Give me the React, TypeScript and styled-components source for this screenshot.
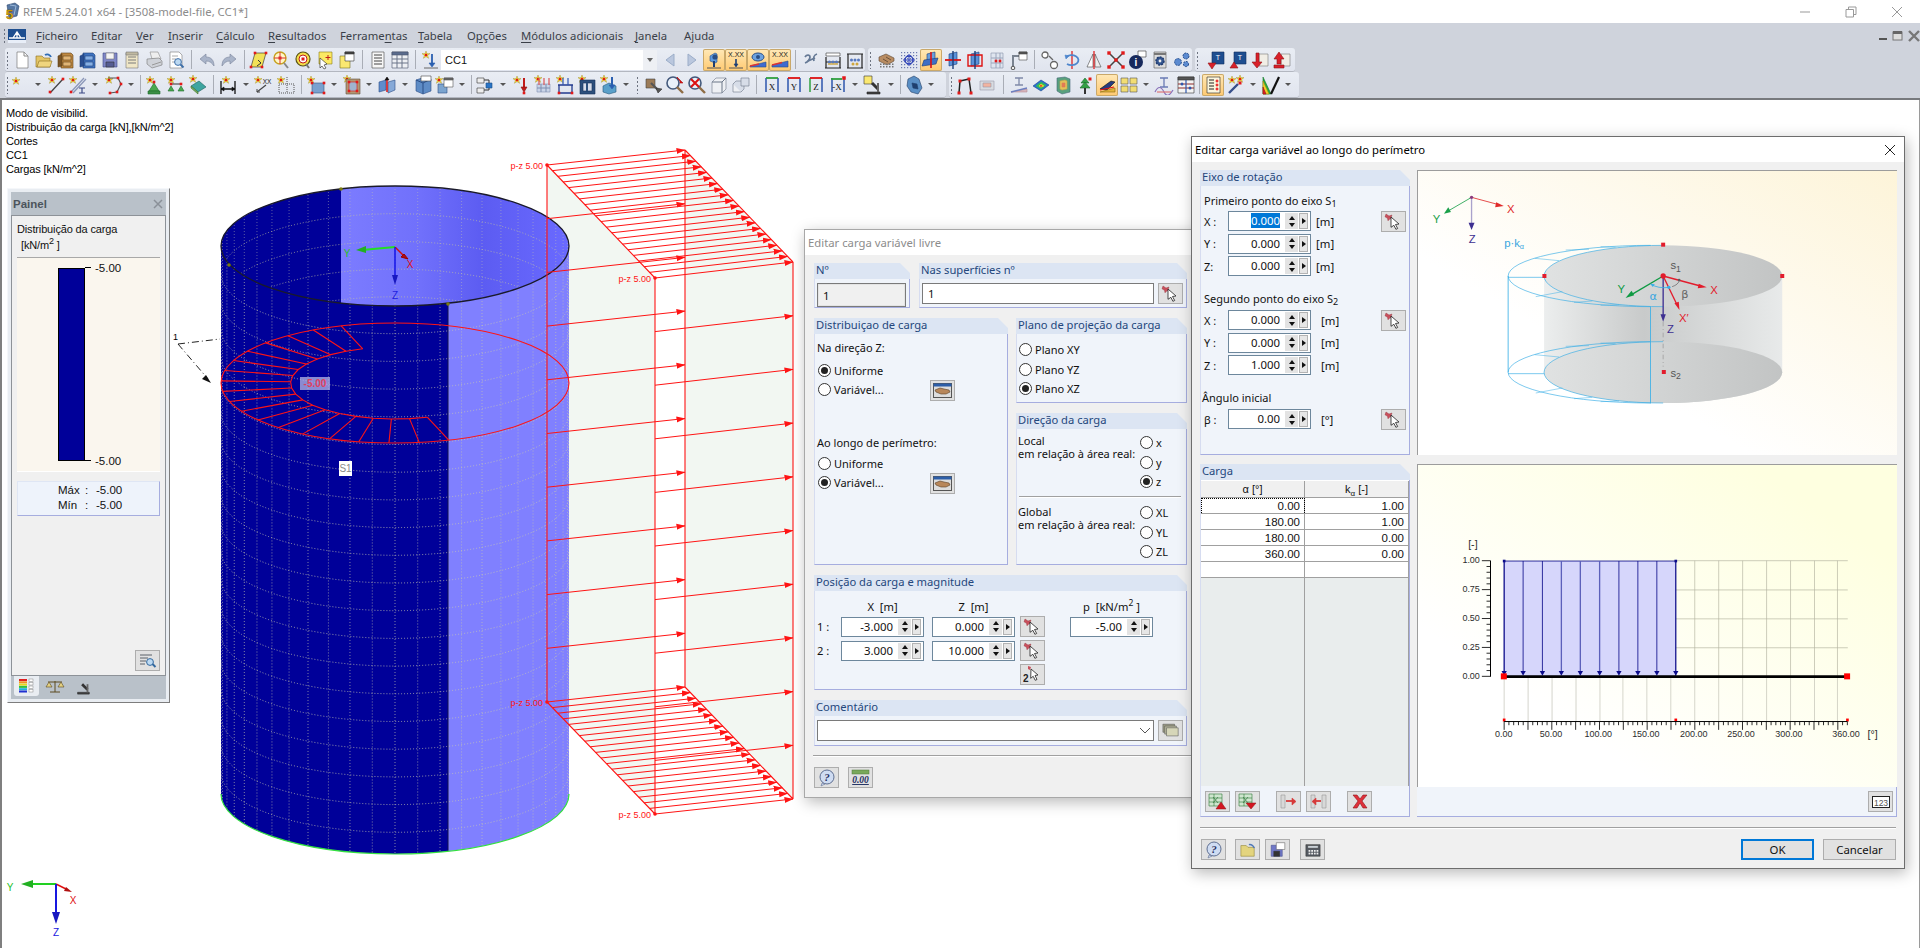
import React from 'react';
import styled, { createGlobalStyle } from 'styled-components';

const UI = '"Noto Sans", "Liberation Sans", sans-serif';
const CL = '"Liberation Sans", Arial, sans-serif';

const Global = createGlobalStyle`
  html, body { margin: 0; padding: 0; background: #fff; overflow: hidden; }
  #root { width: 1920px; height: 948px; }
  * { box-sizing: border-box; }
`;

/* ---------- shell ---------- */
const Win = styled.div`
  width: 1920px; height: 948px; display: flex; flex-direction: column; font-family: ${UI}; color: #111; overflow: hidden;
`;
const TitleBar = styled.header`
  height: 23px; flex: none; display: flex; align-items: center; background: #fff; padding-left: 2px;
`;
const TitleText = styled.span`
  font-size: 11.3px; color: #8b8b8b; margin-left: 3px; flex: 1; white-space: nowrap;
`;
const Caption = styled.div`
  width: 46px; display: flex; justify-content: center; align-items: center; height: 23px;
`;
const Chrome = styled.div`
  flex: none; background: #cfd3dc; border-bottom: 2px solid #77797d;
`;
const MenuBar = styled.nav`
  height: 25px; display: flex; align-items: center; padding-left: 3px;
`;
const Grip = styled.i<{ $h?: number; $m?: number; $l?: number }>`
  display: block; width: 3px; height: ${p => p.$h || 18}px; flex: none; margin: 0 ${p => p.$m ?? 2}px 0 ${p => p.$l ?? 0}px;
  background-image: radial-gradient(circle, #6d7380 0.8px, transparent 1px); background-size: 3px 4px;
`;
const MenuLogo = styled.div`
  width: 18px; height: 14px; background: #1f4f8f; margin: 0 10px 0 2px; flex: none; display: flex;
`;
const MenuItem = styled.span<{ $w: number }>`
  width: ${p => p.$w}px; flex: none; font-size: 11.3px; color: #3a3f48; white-space: nowrap;
  u { text-underline-offset: 2px; }
`;
const MdiBox = styled.div`
  margin-left: auto; display: flex; gap: 4px; padding-right: 0; align-items: center;
`;
const ToolRow = styled.div<{ $h: number }>`
  height: ${p => p.$h}px; display: flex; padding-left: 5px; gap: 3px; align-items: stretch;
`;
const ToolGroup = styled.div<{ $w: number }>`
  width: ${p => p.$w}px; flex: none; display: flex; align-items: center; padding-left: 1px; border-radius: 3px;
  background: linear-gradient(#e9edf4, #e0e4ee); border-bottom: 1px solid #b3b7c0;
`;
const Slot = styled.span<{ $on?: boolean }>`
  width: 22px; height: 22px; flex: none; display: flex; align-items: center; justify-content: center; border-radius: 2px;
  ${p => p.$on ? 'background: linear-gradient(#ffe9b8, #ffc970); box-shadow: inset 0 0 0 1px #c9a86a;' : ''}
`;
const Drop = styled.span`
  width: 13.5px; flex: none; display: flex; justify-content: center; align-items: center;
  &::after { content: ''; border: 3px solid transparent; border-top: 3px solid #555; margin-top: 3px; }
`;
const TSep = styled.span<{ $short?: boolean }>`
  width: ${p => p.$short ? 5 : 8.5}px; height: 19px; flex: none; position: relative;
  &::after { content: ''; position: absolute; left: ${p => p.$short ? 2 : 4}px; top: 0; bottom: 0; width: 1px; background: #a9adb6; }
`;
const CaseCombo = styled.div`
  width: 216px; height: 20px; flex: none; background: #fff; margin: 0 2px 0 0; display: flex; align-items: center;
  font: 11px ${CL}; padding-left: 4px; justify-content: space-between;
`;
const ComboArrow = styled.span`
  width: 14px; height: 20px; background: #eef0f4; display: flex; align-items: center; justify-content: center;
  &::after { content: ''; border: 3px solid transparent; border-top: 4px solid #666; margin-top: 3px; }
`;

/* ---------- workspace ---------- */
const Workspace = styled.main`
  flex: 1; position: relative; background: #fff; box-shadow: inset 2px 0 0 #7f7f7f, inset -1px 0 0 #9a9a9a;
`;
const Scene = styled.svg`
  position: absolute; left: 0; top: 0; width: 1920px; height: 847px;
`;
const Info = styled.div`
  position: absolute; left: 6px; top: 6px; font: 11px/14px ${CL}; letter-spacing: -0.13px; color: #000;
`;

/* ---------- side panel ---------- */
const Panel = styled.aside`
  position: absolute; left: 7px; top: 88px; width: 163px; height: 515px; padding: 3px; background: #e9edf2;
  border-right: 1px solid #7d7d7d; border-bottom: 1px solid #7d7d7d; border-top: 1px solid #f5f7fa; border-left: 1px solid #f5f7fa;
  display: flex; flex-direction: column; font-family: ${CL};
`;
const PanelHead = styled.div`
  height: 23px; flex: none; background: #b9c1c9; display: flex; align-items: center; justify-content: space-between; padding: 0 3px 0 2px;
  font: bold 11.5px ${CL}; color: #4c545c;
`;
const PanelBody = styled.div`
  flex: 1; background: #f0f0f0; border: 1px solid #8d9298; display: flex; flex-direction: column; padding: 6px 5px 4px 5px; font-size: 11px;
`;
const PanelLine = styled.div<{ $h?: number; $l?: number }>`
  height: ${p => p.$h || 15}px; padding-left: ${p => p.$l || 0}px; line-height: 15px; white-space: nowrap; letter-spacing: -0.15px;
  sup { font-size: 9px; line-height: 0; }
`;
const Legend = styled.div`
  height: 215px; margin-top: 2px; background: #faf6ee; border-top: 1px solid #a8a8a8; border-bottom: 1px solid #fff; display: flex; padding: 10px 0 10px 41px;
`;
const LegendBar = styled.div`
  width: 27px; background: #000099; border: 1px solid #000; flex: none;
`;
const LegendTicks = styled.div`
  display: flex; flex-direction: column; justify-content: space-between; margin: -7px 0 -6px;
`;
const Tick = styled.span`
  display: flex; align-items: center; gap: 4px; height: 13px; font-size: 11.5px;
  &::before { content: ''; width: 6px; height: 1px; background: #000; }
`;
const Stats = styled.div`
  margin-top: 9px; height: 35px; background: #eef3fb; border: 1px solid #dfe6f4; border-bottom: 1px solid #a6addf; border-right: 1px solid #a6addf;
  display: grid; grid-template-columns: 27px 11px auto; grid-auto-rows: 15px; padding: 2px 0 0 40px; font-size: 11.5px;
  justify-content: start; justify-items: start;
`;
const PanelFoot = styled.div`
  margin-top: auto; display: flex; justify-content: flex-end;
`;
const PanelTabs = styled.div`
  height: 23px; flex: none; background: #b9c1c9; display: flex; align-items: flex-start; padding-left: 3px; gap: 3px;
`;
const PanelTab = styled.span<{ $on?: boolean }>`
  width: 25px; height: 20px; display: flex; align-items: center; justify-content: center; ${p => p.$on ? 'background: #e9edf2; border-radius: 0 0 3px 3px;' : ''}
`;

/* ---------- dialogs ---------- */
const Dialog = styled.section<{ $x: number; $y: number; $w: number; $h: number; $active?: boolean }>`
  position: absolute; left: ${p => p.$x}px; top: ${p => p.$y}px; width: ${p => p.$w}px; height: ${p => p.$h}px;
  background: #f0f0f0; border: 1px solid ${p => p.$active ? '#6d6d6d' : '#a8a8a8'}; display: flex; flex-direction: column;
  box-shadow: 2px 4px 14px rgba(0, 0, 0, .28); font-size: 11px;
`;
const DialogTitle = styled.div<{ $active?: boolean }>`
  height: 25px; flex: none; background: #fff; display: flex; align-items: center; justify-content: space-between; padding: 0 8px 0 3px;
  font-size: 11.3px; color: ${p => p.$active ? '#000' : '#8c8c8c'};
`;
const DialogBody = styled.div<{ $pad: string; $gap?: number }>`
  flex: 1; min-height: 0; padding: ${p => p.$pad}; display: flex; flex-direction: column; gap: ${p => p.$gap ?? 0}px;
`;
const Row = styled.div<{ $gap?: number; $h?: number }>`
  display: flex; gap: ${p => p.$gap ?? 8}px; ${p => p.$h ? `height: ${p.$h}px; flex: none;` : ''}
`;
const Col = styled.div<{ $gap?: number; $w?: number }>`
  display: flex; flex-direction: column; gap: ${p => p.$gap ?? 0}px; ${p => p.$w ? `width: ${p.$w}px; flex: none;` : 'flex: 1;'}
`;
const Section = styled.div<{ $w?: number; $h?: number }>`
  display: flex; flex-direction: column; ${p => p.$w ? `width: ${p.$w}px; flex: none;` : 'flex: 1; min-width: 0;'} ${p => p.$h ? `height: ${p.$h}px; flex: none;` : ''}
`;
const SectionHead = styled.div`
  height: 16px; flex: none; background: #dce5f3; padding-left: 2px; line-height: 13px; color: #24477c; font-size: 11.2px; white-space: nowrap;
  clip-path: polygon(0 0, calc(100% - 10px) 0, 100% 10px, 100% 100%, 0 100%);
`;
const SectionBody = styled.div<{ $pad?: string }>`
  flex: 1; min-height: 0; background: #f0f4fa; border-right: 1px solid #a6addf; border-bottom: 1px solid #a6addf; border-left: 1px solid #d6dcf0;
  padding: ${p => p.$pad || '0'}; display: flex; flex-direction: column;
`;
const Text = styled.div<{ $h?: number; $t?: number; $l?: number }>`
  height: ${p => p.$h || 16}px; line-height: ${p => p.$h || 16}px; margin-top: ${p => p.$t || 0}px; margin-left: ${p => p.$l || 0}px; white-space: nowrap; flex: none;
  sub { font-size: 9px; line-height: 0; vertical-align: -2px; }
  sup { font-size: 8.5px; line-height: 0; }
`;
const FieldBox = styled.div<{ $ro?: boolean; $w?: number }>`
  height: 21px; ${p => p.$w ? `width: ${p.$w}px; flex: none;` : 'flex: 1;'} background: ${p => p.$ro ? '#f0f0f0' : '#fff'};
  border: 1px solid #7a7a7a; box-shadow: inset 0 0 0 1px ${p => p.$ro ? '#e4e4e4' : '#fff'}; padding-left: 5px; line-height: 19px; font-size: 11.4px;
  display: flex; align-items: center; justify-content: space-between;
`;
const IconBtn = styled.button`
  width: 25px; height: 21px; flex: none; padding: 0; background: #e1e1e1; border: 1px solid #adadad; display: flex; align-items: center; justify-content: center;
`;
const RadioWrap = styled.div<{ $h?: number; $t?: number; $l?: number }>`
  height: ${p => p.$h || 19}px; display: flex; align-items: center; gap: 3px; margin-top: ${p => p.$t || 0}px; margin-left: ${p => p.$l || 0}px; white-space: nowrap; flex: none;
`;
const Dot = styled.span<{ $on?: boolean }>`
  width: 13px; height: 13px; flex: none; border-radius: 50%; background: #fff; border: 1px solid #333; display: flex; align-items: center; justify-content: center;
  ${p => p.$on ? '&::after { content: ""; width: 7px; height: 7px; border-radius: 50%; background: #222; }' : ''}
`;
const Spin = styled.div`
  width: 83px; height: 20px; flex: none; background: #fff; border: 1px solid #6d879c; display: flex; align-items: center; padding-right: 2px;
`;
const SpinVal = styled.div`
  flex: 1; text-align: right; padding-right: 5px; font-size: 11.4px; line-height: 18px; color: #111;
  mark { background: #0078d7; color: #fff; }
`;
const SpinBtn = styled.div`
  width: 13px; height: 16px; flex: none; background: #e3e3e3; display: flex; flex-direction: column; justify-content: space-around; align-items: center; padding: 1px 0;
  &::before { content: ''; border: 3px solid transparent; border-top: 0; border-bottom: 4px solid #111; }
  &::after { content: ''; border: 3px solid transparent; border-bottom: 0; border-top: 4px solid #111; }
`;
const SpinNext = styled.div`
  width: 9px; height: 16px; flex: none; margin-left: 1px; background: #e6e6e6; border: 1px solid #b3b3b3; display: flex; align-items: center; justify-content: center;
  &::after { content: ''; border: 3px solid transparent; border-right: 0; border-left: 4px solid #111; }
`;
const Rule = styled.div<{ $m?: string }>`
  height: 2px; flex: none; border-top: 1px solid #a0a0a0; border-bottom: 1px solid #fff; margin: ${p => p.$m || '0'};
`;
const Foot = styled.div<{ $pad: string }>`
  display: flex; align-items: center; padding: ${p => p.$pad}; flex: none;
`;
const Push = styled.span<{ $w?: number }>`
  ${p => p.$w ? `width: ${p.$w}px; flex: none;` : 'flex: 1;'}
`;
const PosGrid = styled.div`
  display: grid; grid-template-columns: 24px 83px 8px 83px 5px 25px 25px 83px; grid-template-rows: 19px 21px 3px 21px 3px 21px; align-items: center; padding: 6px 0 0 2px;
`;
const ColHead = styled.div<{ $c: number }>`
  grid-column: ${p => p.$c}; text-align: center; white-space: nowrap; font-size: 11.2px; grid-row: 1;
  sup { font-size: 8.5px; line-height: 0; }
`;
const Cell = styled.div<{ $c: number; $r: number }>`
  grid-column: ${p => p.$c}; grid-row: ${p => p.$r}; font-size: 11.2px;
`;
const AxisGrid = styled.div<{ $t: number }>`
  display: grid; grid-template-columns: 24px 83px 1fr 25px; grid-auto-rows: 20px; row-gap: 2.5px; align-items: center; padding-left: 2px; margin-top: ${p => p.$t}px;
`;
const Unit = styled.span<{ $o?: number }>`
  padding-left: ${p => 5 + (p.$o || 0)}px; font-size: 11.4px;
`;
const PickCell = styled.div`
  grid-column: 4; grid-row: 1;
`;
const TwoPanes = styled.div`
  display: flex; gap: 7px;
`;
const Drawing = styled.div<{ $h: number }>`
  width: 480px; height: ${p => p.$h}px; flex: none; border-top: 1px solid #9c9c9c; border-left: 1px solid #9c9c9c;
`;
const DrawSvg = styled.svg`
  display: block; width: 100%; height: 100%;
`;
const TableHead = styled.div`
  display: grid; grid-template-columns: 104px 104px; height: 18px; background: #f0f0f0; border-bottom: 1px solid #a0a0a0; border-top: 1px solid #fff; flex: none;
`;
const HeadCell = styled.div`
  text-align: center; font: 11px/17px ${CL}; border-right: 1px solid #a0a0a0;
  sub { font-size: 8px; line-height: 0; }
`;
const TableRow = styled.div`
  display: grid; grid-template-columns: 104px 104px; height: 16px; background: #fff; border-bottom: 1px solid #a0a0a0; flex: none;
`;
const ValCell = styled.div<{ $focus?: boolean }>`
  text-align: right; padding-right: 4px; font: 11.5px/17px ${CL}; border-right: 1px solid #a0a0a0;
  ${p => p.$focus ? 'outline: 1px dotted #000; outline-offset: -1px;' : ''}
`;
const TableFill = styled.div`
  flex: 1; display: grid; grid-template-columns: 104px 104px; background: #e9eded;
`;
const FillCell = styled.div`
  border-right: 1px solid #a0a0a0;
`;
const BtnStrip = styled.div`
  height: 30px; flex: none; display: flex; align-items: center; padding-left: 4px; gap: 5px;
`;
const ChartBar = styled.div`
  flex: 1; display: flex; align-items: center; justify-content: flex-end; padding-right: 3px; background: #f0f4fa; border-right: 1px solid #a6addf; border-bottom: 1px solid #a6addf;
`;
const TextBtn = styled.button<{ $primary?: boolean }>`
  width: 73px; height: 21px; flex: none; font: 11.4px ${UI}; color: #111; padding: 0; background: #e1e1e1;
  border: ${p => p.$primary ? '2px solid #0078d7' : '1px solid #adadad'};
`;

/* ---------- small drawings ---------- */
const S = (x = 5, y = 5) => (
  <g>
    <path d={`M${x} ${y - 4}l1 2.8 3-.2-2.4 1.8 1 2.9-2.6-1.7-2.6 1.7 1-2.9-2.4-1.8 3 .2z`} fill="#ffe93b" stroke="#8f7f18" strokeWidth=".4" />
    <rect x={x - 1.2} y={y - 1.2} width="2.4" height="2.4" fill="#e01818" />
  </g>
);
const N = (x: number, y: number, s = 2.6) => <rect x={x - s / 2} y={y - s / 2} width={s} height={s} fill="#e21a1a" />;
const L = (d: string, c = '#333', w = 1) => <path d={d} fill="none" stroke={c} strokeWidth={w} />;
const F = (d: string, c: string, s = '#555') => <path d={d} fill={c} stroke={s} strokeWidth=".6" />;

const icons: Record<string, React.ReactNode> = {
  new: <>{F('M5 2h7l4 4v12H5z', '#fff', '#666')}{L('M12 2v4h4', '#888')}</>,
  open: <>{F('M2 6h6l2 2h6v9H2z', '#e3c566', '#8a6d1e')}{F('M3 17l2-6h13l-2 6z', '#f0d57e', '#8a6d1e')}{L('M11 5a4 4 0 0 1 6 2', '#2f6cb5', 1.8)}</>,
  cabB: <>{F('M5 3h10l2 2v13H5z', '#c08a43', '#5f3f17')}{F('M7 6h8v4H7z', '#e0b577', '#5f3f17')}{F('M7 12h8v4H7z', '#e0b577', '#5f3f17')}{F('M2 6l4-2v12l-4 1z', '#7a5526', '#5f3f17')}</>,
  cabU: <>{F('M5 3h10l2 2v13H5z', '#3f73c0', '#1f3f77')}{F('M7 6h8v4H7z', '#86b0e5', '#1f3f77')}{F('M7 12h8v4H7z', '#86b0e5', '#1f3f77')}{F('M2 6l4-2v12l-4 1z', '#2a4f92', '#1f3f77')}</>,
  save: <>{F('M3 3h14v14H3z', '#7f87c8', '#3d4684')}{F('M6 3h8v6H6z', '#f4f4f4', '#777')}{F('M6 12h8v5H6z', '#555c92', '#333')}</>,
  notes: <>{F('M4 3h12v15H4z', '#efe6c6', '#777')}{L('M6 7h8M6 10h8M6 13h8', '#7a7a7a')}{F('M4 2h12v3H4z', '#bfb8a0', '#777')}</>,
  print: <>{F('M6 2h8l3 7H8z', '#eee', '#888')}{F('M3 9l12-1 3 3v4l-10 3-5-4z', '#cfd2d8', '#777')}{L('M8 15l9-3', '#999')}</>,
  preview: <>{F('M4 2h9l3 3v13H4z', '#fff', '#777')}{L('M6 6h6M6 9h4M6 12h3', '#aaa')}<circle cx="12" cy="12" r="3.4" fill="#bcd9f2" stroke="#3f6fa8" />{L('M14.5 14.5l3 3', '#3f6fa8', 2)}</>,
  undo: <>{F('M3 9l6-5v3c5 0 8 3 8 9-2-3-4-5-8-5v3z', '#a9b4c9', '#78839a')}</>,
  redo: <>{F('M17 9l-6-5v3c-5 0-8 3-8 9 2-3 4-5 8-5v3z', '#a9b4c9', '#78839a')}</>,
  para: <>{F('M6 3h11l-4 14H2z', '#f2e257', '#222')}{L('M9 10l3 3l-4 3', '#333')}{N(6, 3)}{N(17, 3)}{N(13, 17)}{N(2, 17)}</>,
  zoomT: <><circle cx="9" cy="8" r="6" fill="#fff7c8" stroke="#c7a21f" strokeWidth="1.4" />{N(9, 8, 3)}{L('M3 8h12M9 2v12', '#d33')}{L('M13 13l4 5', '#888', 2)}</>,
  targetY: <><circle cx="10" cy="9" r="7" fill="#f5de49" stroke="#5a5417" strokeWidth="1.2" /><circle cx="10" cy="9" r="4" fill="#fff" stroke="#c01b1b" />{N(10, 9, 3)}{L('M13 14l3 4', '#777', 2)}</>,
  cursorNote: <>{F('M4 2h13v12H4z', '#fbe964', '#8a7d16')}{L('M13 5v5M10.5 7.5h5', '#c01b1b')}{F('M5 8l7 6-3 1 2 3-2 1-2-3-2 2z', '#fff', '#222')}</>,
  winY: <>{F('M3 6h10v12H3z', '#fbe871', '#77701f')}{F('M8 2h9v9H8z', '#fff', '#333')}{F('M8 2h9v2H8z', '#444', '#333')}</>,
  list: <>{F('M4 2h12v16H4z', '#f7f7f7', '#444')}{L('M6 5h8M6 8h8M6 11h8M6 14h8', '#444')}</>,
  table: <>{F('M2 2h16v16H2z', '#eef0f4', '#47506a')}{F('M2 2h16v3H2z', '#5a6b8d', '#47506a')}{L('M2 9h16M2 13h16M7 5v13M12 5v13', '#6a7489')}</>,
  lc: <>{S(6, 5)}{L('M12 4v11', '#2a5fb0', 1.8)}{F('M9 13l3 4 3-4z', '#2a5fb0', '#2a5fb0')}{L('M4 18h14', '#666')}</>,
  pL: <>{F('M11 3l-5 3v5l5 2 2-1V4z', '#5d9be0', '#2a4f86')}<circle cx="11" cy="7" r="2.6" fill="#2a4f86" />{L('M10 11v6', '#1c3e75', 2)}{L('M3 18h14', '#555')}</>,
  xx: <><text x="10" y="7" textAnchor="middle" fontFamily={CL} fontSize="7" fill="#222">X.XX</text>{L('M10 9v7', '#1c3e75', 1.6)}{F('M8 14l2 3 2-3z', '#1c3e75', '#1c3e75')}{L('M3 18h14', '#555')}</>,
  eyeR: <><ellipse cx="10" cy="7" rx="6" ry="4" fill="#6ca2df" stroke="#294d84" /><circle cx="10" cy="7" r="2" fill="#2a4f86" />{F('M2 16l16-4v5H2z', '#3f6bd0', '#2a4f86')}{L('M2 16l9-2', '#d33', 1.5)}</>,
  xxR: <><text x="10" y="7" textAnchor="middle" fontFamily={CL} fontSize="7" fill="#222">X.XX</text>{F('M2 15l16-4v6H2z', '#3f6bd0', '#2a4f86')}{L('M2 15l10-2.5', '#d33', 1.5)}</>,
  hinge: <>{L('M4 7c2-3 5-2 5 0s-2 5-5 6', '#667a96', 1.8)}{L('M16 4c-3 1-4 4-3 7', '#667a96', 1.8)}{L('M7 11l7-3', '#667a96', 1.8)}</>,
  frame: <>{F('M3 3h14v3H3z', '#fff', '#333')}{L('M2 18h16M3 7v11M17 7v11M3 12h14', '#222', 1.2)}<circle cx="6.5" cy="12" r="1.5" fill="#5879be" /><circle cx="10" cy="12" r="1.5" fill="#5879be" /><circle cx="13.5" cy="12" r="1.5" fill="#5879be" />{L('M5 14h10', '#cfa63d', 1.4)}</>,
  frameB: <>{L('M2 4h16M2 18h16M3 4v14M17 4v14', '#222', 1.2)}<circle cx="6.5" cy="10" r="1.5" fill="#5879be" /><circle cx="10" cy="10" r="1.5" fill="#5879be" /><circle cx="13.5" cy="10" r="1.5" fill="#5879be" /><circle cx="8" cy="14" r="1.5" fill="#cfa63d" /><circle cx="12" cy="14" r="1.5" fill="#cfa63d" /></>,
  hand: <>{F('M2 7l7-3 8 4v3l-7 4-8-4z', '#b88c62', '#5b4530')}{L('M6 9l5 3M9 7l5 3', '#5b4530', .8)}<g fill="#777">{[3, 6, 9, 12, 15].map(x => <rect key={x} x={x} y="16" width="1.5" height="1.5" />)}{[3, 6, 9, 12, 15].map(x => <rect key={x} x={x} y="13.5" width="1.5" height="1.5" />)}</g></>,
  gridT: <><g fill="#6c7ab0">{[2, 5, 8, 11, 14, 17].flatMap(x => [2, 5, 8, 11, 14, 17].map(y => <rect key={x + '-' + y} x={x} y={y} width="1.2" height="1.2" />))}</g><circle cx="10" cy="10" r="4" fill="none" stroke="#2a3fb8" strokeWidth="1.4" />{L('M10 4v12M4 10h12', '#2a3fb8')}</>,
  planes: <>{F('M6 4l8-2v10l-8 2z', '#6ba0dc', '#1a3c78')}{F('M3 10l14-2-2 6-14 2z', '#3f6fc4', '#1a3c78')}{L('M10 2v16', '#d11', 1.6)}</>,
  planesR: <>{F('M6 4l8-2v12l-8 2z', '#5a92da', '#1a3c78')}{L('M2 10h16', '#d11', 1.8)}{L('M10 1v18', '#1a3c78', 1.4)}</>,
  planesK: <>{F('M6 4l8-2v12l-8 2z', '#5a92da', '#1a3c78')}{L('M3 5h14v11H3z', '#d11', 1.4)}{L('M10 1v18', '#1a3c78', 1.4)}</>,
  bld: <>{F('M4 3h12v15H4z', '#dfe5ef', '#8892a8')}{L('M4 8h12M4 13h12M9 3v15M13 3v15', '#9aa5bb')}{N(9, 11)}{N(13, 11)}</>,
  member: <>{L('M4 18V6h8', '#7a8390', 2)}{F('M10 2h8v8h-8z', '#fff', '#444')}{F('M10 2h8v2h-8z', '#555', '#444')}<circle cx="4" cy="18" r="1.8" fill="#eee" stroke="#555" /></>,
  chain: <><circle cx="5" cy="5" r="3" fill="#fff" stroke="#666" strokeWidth="1.3" /><circle cx="14" cy="15" r="3.5" fill="#fff" stroke="#666" strokeWidth="1.3" />{L('M9 6l4 4', '#666', 1.3)}</>,
  rotate: <>{L('M10 1v18', '#d11', 1.2)}{L('M4 7a7 5 0 1 1 1 7', '#4f86cc', 1.8)}{F('M3 5l4 1-3 3z', '#4f86cc', '#4f86cc')}</>,
  mirror: <>{F('M9 4l-6 13h6z', '#fff', '#444')}{F('M11 4l6 13h-6z', '#eee', '#444')}{L('M10 1v18', '#d11', 1.2)}</>,
  cross: <>{L('M4 4l12 12M16 4l-12 12', '#444', 1.5)}{N(3, 3, 3.4)}{N(17, 3, 3.4)}{N(3, 17, 3.4)}{N(17, 17, 3.4)}{N(10, 10, 3.4)}</>,
  info: <>{F('M10 1h8v6h-8z', '#fff', '#333')}<circle cx="8" cy="12" r="7" fill="#17295c" /><text x="8" y="16" textAnchor="middle" fontFamily={CL} fontWeight="700" fontSize="10" fill="#fff">i</text></>,
  gear: <>{F('M4 2h12v16H4z', '#dcdcdc', '#555')}<circle cx="10" cy="11" r="4" fill="#33558f" stroke="#203b6f" strokeWidth="1.5" strokeDasharray="2 1" /><circle cx="10" cy="11" r="1.4" fill="#eee" />{L('M4 4h12', '#777', 2)}</>,
  cogs: <><circle cx="6" cy="12" r="3.4" fill="#5b8ad0" stroke="#29508d" strokeDasharray="2 1" /><circle cx="14" cy="6" r="3" fill="#5b8ad0" stroke="#29508d" strokeDasharray="2 1" /><circle cx="14" cy="14" r="2.6" fill="#5b8ad0" stroke="#29508d" strokeDasharray="2 1" /></>,
  expD: <>{F('M6 2h12v12H6z', '#1e4e90', '#12305f')}<text x="12" y="10" textAnchor="middle" fontFamily={CL} fontSize="7" fill="#fff">T</text>{F('M2 13h8l-4 6z', '#d9202a', '#8f1418')}</>,
  expU: <>{F('M6 2h12v12H6z', '#1e4e90', '#12305f')}<text x="12" y="10" textAnchor="middle" fontFamily={CL} fontSize="7" fill="#fff">T</text>{F('M6 12l4 6H2z', '#d9202a', '#8f1418')}</>,
  pdfD: <>{F('M9 4h9v12H9z', '#f1eee6', '#777')}{F('M6 3v9H2l5 6 5-6H9V3z', '#d9202a', '#8f1418')}</>,
  pdfU: <>{F('M9 4h9v12H9z', '#f1eee6', '#777')}{F('M7 2l5 7H9v5H5V9H2zM2 15h10v3H2z', '#d9202a', '#8f1418')}</>,
  node: <>{S(6, 6)}</>,
  line: <>{S(6, 5)}{L('M4 18L17 4', '#444', 1.3)}{N(4, 17)}{N(17, 4)}</>,
  lineT: <>{S(5, 5)}{L('M3 17L16 3M5 18L18 4', '#8b97b8', 1.3)}{N(3, 17)}{L('M11 13h6M14 13v5M11 18h6', '#3c4b86', 1.2)}</>,
  poly: <>{S(6, 5)}{L('M5 3h10l3 6-4 8-7 1', '#555', 1.2)}{N(15, 3)}{N(18, 9)}{N(14, 17)}{N(7, 18)}</>,
  sup: <>{S(6, 5)}{F('M10 8l5 8H5z', '#49a84f', '#1f6b2c')}{F('M4 16h12v3H4z', '#3b8f45', '#1f6b2c')}{N(10, 7)}</>,
  sup2: <>{S(5, 5)}{L('M4 9h12', '#333')}{N(5, 9)}{N(15, 9)}{F('M5 11l3 5H2z', '#49a84f', '#1f6b2c')}{F('M15 11l3 5h-6z', '#49a84f', '#1f6b2c')}</>,
  plate: <>{S(5, 4)}{F('M3 11l8-5 7 6-8 5z', '#3ea5a0', '#1d5f5c')}{F('M3 11v2l7 6v-2z', '#76b05d', '#3c6f2c')}</>,
  dim: <>{S(8, 5)}{L('M3 6v13M17 6v13M3 14h14', '#111', 1.3)}{F('M3 14l3-2v4z', '#111', '#111')}{F('M17 14l-3-2v4z', '#111', '#111')}</>,
  xxA: <>{S(4, 5)}<text x="13" y="9" textAnchor="middle" fontFamily={CL} fontSize="6.5" fill="#222">XX</text>{L('M3 17L12 10', '#444', 1.2)}{L('M3 17v-3M3 17h3', '#444')}</>,
  dash: <>{S(5, 5)}<path d="M3 9h15v9H3zM11 2v16" fill="none" stroke="#555" strokeDasharray="1 1" /></>,
  surf: <>{S(5, 5)}{F('M6 8h12v10H6z', '#7aa1cf', '#39587f')}{N(6, 8)}{N(18, 8)}{N(6, 18)}{N(18, 18)}</>,
  sq: <>{S(5, 4)}{F('M4 4h14v15H4z', '#b29774', '#604e39')}{F('M7 7h8v9H7z', '#9fb4cf', '#d11')}{N(7, 7)}{N(15, 7)}{N(7, 16)}{N(15, 16)}</>,
  wings: <>{F('M2 7l7-2v10l-7 2z', '#5f8ccc', '#2b4e86')}{F('M18 5l-7 2v11l7-3z', '#86a9d8', '#2b4e86')}{L('M10 3v14', '#d11', 1.5)}{F('M8 5l2-3 2 3z', '#111', '#111')}</>,
  solid: <>{F('M3 5l9-3 6 2v12l-8 3-7-3z', '#5e8cc6', '#2b4e86')}{L('M3 5l7 3v11M10 8l8-4', '#2b4e86')}{F('M8 1h10v5H8z', '#fff', '#444')}</>,
  boxes: <>{S(4, 5)}{F('M3 9h9v9H3z', '#7ba4cf', '#2b4e86')}{F('M9 3h9v9H9z', '#fff', '#555')}{F('M9 3h9v2H9z', '#666', '#555')}</>,
  ports: <>{F('M2 3h7v5H2z', '#eee', '#333')}{F('M2 13h7v5H2z', '#eee', '#333')}{F('M11 8h6v5h-6z', '#2a74c5', '#174e88')}{L('M9 5h5v3M9 15h5v-2', '#333')}</>,
  nodeL: <>{S(6, 5)}{L('M13 3v11', '#c01b1b', 2)}{F('M10 12l3 5 3-5z', '#c01b1b', '#8a1111')}{N(13, 18)}</>,
  fr1: <>{S(5, 4)}{F('M4 9h13v8H4z', '#c9d4e8', '#7f8fb0')}{L('M4 13h13M8 9v8M13 9v8', '#7f8fb0')}{L('M6 3v7M11 3v7M16 3v7', '#d55', 1.2)}</>,
  fr2: <>{S(5, 4)}{L('M3 10h15M3 18h15M4 10v8M17 10v8', '#223a8e', 1.3)}{L('M8 3v7M13 3v7', '#2f58b5', 1.2)}{N(4, 18)}{N(17, 18)}</>,
  fr3: <>{S(5, 4)}{F('M3 5h15v14H3z', '#2c4f7c', '#173057')}{F('M6 8h9v8H6z', '#d6dce9', '#173057')}{L('M10 8v8', '#2c4f7c', 2)}</>,
  bottle: <>{S(5, 4)}{F('M4 11l6-3 7 3v6l-7 2-6-2z', '#5aa0ca', '#27597c')}{L('M13 2v10', '#2a5fb0', 2)}{F('M10 10l3 4 3-4z', '#2a5fb0', '#2a5fb0')}</>,
  cat: <>{F('M3 4h9v9H3z', '#9b7b58', '#444')}{L('M8 8l8 8', '#555', 2.2)}{F('M13 13l6 1-4 4z', '#555', '#333')}</>,
  zoomR: <><circle cx="8" cy="8" r="6" fill="#e9f1fa" stroke="#43597c" strokeWidth="1.6" />{L('M12 12l6 6', '#8f6d45', 2.4)}{F('M12 2l6 6-3 0 0-2-3-3z', '#d11', '#a11')}</>,
  zoomX: <><circle cx="8" cy="8" r="6" fill="#e9f1fa" stroke="#43597c" strokeWidth="1.6" />{L('M12 12l6 6', '#8f6d45', 2.4)}{L('M4 4l8 8M12 4l-8 8', '#d11', 2)}</>,
  cube: <>{F('M3 7l4-4h10v11l-4 4H3z', '#eef0f4', '#6b7688')}{L('M3 7h10v11M13 7l4-4', '#6b7688')}</>,
  cubes: <>{F('M2 9h8v8H2z', '#eef0f4', '#6b7688')}{F('M2 9l3-3h8v8l-3 3', '#d7dde8', '#6b7688')}{F('M10 3h8v8h-8z', '#d7dde8', '#6b7688')}</>,
  vX: <>{L('M4 3v14M16 3v14', '#2d56ad', 1.5)}{L('M4 3h12', '#2fa13f', 1.8)}<text x="10" y="15" textAnchor="middle" fontFamily='"Liberation Serif"' fontSize="9" fill="#111">X</text></>,
  vY: <>{L('M4 3v14M16 3v14', '#2d56ad', 1.5)}{L('M4 3h12', '#d11', 1.8)}<text x="10" y="15" textAnchor="middle" fontFamily='"Liberation Serif"' fontSize="9" fill="#111">Y</text></>,
  vZ: <>{L('M4 3v14', '#2fa13f', 1.5)}{L('M16 3v14', '#2d56ad', 1.5)}{L('M4 3h12', '#d11', 1.8)}<text x="10" y="15" textAnchor="middle" fontFamily='"Liberation Serif"' fontSize="9" fill="#111">Z</text></>,
  vmX: <>{L('M4 3v14', '#2d56ad', 1.5)}{L('M16 3v14', '#2d56ad', 1.5)}{L('M3 4h11', '#2fa13f', 1.8)}{N(16, 3, 3.5)}<text x="9" y="15" textAnchor="middle" fontFamily='"Liberation Serif"' fontSize="9" fill="#111">-X</text></>,
  micro: <>{F('M1 1h8v8H1z', '#fbe871', '#333')}{L('M9 8l6 6', '#333', 3)}{F('M4 17h13v2H4z', '#444', '#222')}{L('M15 8v9', '#666', 2)}</>,
  scope: <>{L('M9 8l6 6', '#333', 3)}{F('M4 17h13v2H4z', '#444', '#222')}{L('M15 8v9', '#666', 2)}</>,
  shape: <>{F('M4 4l6-3 5 3 3 9-4 6-7-2-4-6z', '#5a8fc5', '#253f68')}{F('M8 8l5 1 1 5-5-1z', '#1f3f6e', '#1f3f6e')}</>,
  pi: <>{L('M4 6l9-2M4 6l-1 12M13 4l2 14', '#222', 1.5)}{N(3, 18, 3)}{N(15, 18, 3)}{N(4, 6, 3)}{N(13, 4, 3)}</>,
  chip: <>{F('M2 6h14v9H2z', '#d8dbe0', '#99a')}{F('M5 8h8v4H5z', '#f1b3a0', '#99a')}</>,
  beam: <>{L('M6 3h8M10 3v7M6 10h8', '#7f89a8', 1.3)}{F('M2 17l16-3v3H2z', '#d7b6bd', '#b58a94')}{L('M2 17l16-4', '#6d7fc0', 1.3)}</>,
  rainbow: <>{F('M2 11l8-6 8 5-8 6z', '#2a6ecf', '#1d4a8c')}{F('M5 11l5-4 5 3-5 4z', '#2fbd5a', '#2fbd5a')}{F('M8 11l2-2 3 2-3 1z', '#f3d02c', '#f3d02c')}{F('M9 11l1-1 1 1-1 .5z', '#e33', '#e33')}</>,
  heat: <>{F('M4 3l8-1 5 2v13l-8 2-5-3z', '#58a07e', '#486a78')}{F('M7 6l5-1 2 1v8l-5 1-2-1z', '#e1c35a', '#c9a14a')}{F('M9 8h3v4H9z', '#e37b55', '#e37b55')}</>,
  tree: <>{F('M10 3l4 5H6z', '#34a046', '#1d6a2a')}{F('M10 7l5 6H5z', '#34a046', '#1d6a2a')}{L('M10 13v6', '#333', 2)}{N(15, 4, 3)}</>,
  blade: <>{F('M3 14l11-8 4 1-8 8z', '#253c80', '#111')}{F('M3 17l15-4v4z', '#e3b53d', '#8c6a12')}{L('M3 15l14-3', '#d11', 1.2)}</>,
  tiles: <>{F('M2 3h7v6H2z', '#f2dd73', '#555')}{F('M11 3h7v6h-7z', '#f2dd73', '#555')}{F('M2 11h7v6H2z', '#f2dd73', '#555')}{F('M11 11h7v6h-7z', '#f2dd73', '#555')}</>,
  sine: <>{L('M6 3h8M10 3v9M6 12h8', '#6a7bb5', 1.3)}{L('M1 17c3-6 6-6 9 0s6 3 9-2', '#8870b8', 1.2)}{L('M3 17h14', '#d77', 1.2)}</>,
  abacus: <>{F('M2 2h16v16H2z', '#f4f4f4', '#333')}{F('M2 2h16v3H2z', '#555', '#333')}{L('M2 9h16M2 13h16', '#8b2b2b', 1.2)}{L('M10 5v13', '#2d56ad', 1.2)}<circle cx="6" cy="9" r="1.5" fill="#2d56ad" /><circle cx="14" cy="13" r="1.5" fill="#2d56ad" /></>,
  listBox: <>{F('M4 2h13v16H4z', '#fbf6dd', '#222')}{L('M6 5h5M6 8h5M6 11h5M6 14h5', '#222', 1.2)}{F('M13 5h2v2h-2zM13 9h2v2h-2zM13 13h2v2h-2z', '#e33', '#e33')}</>,
  wand: <>{S(7, 5)}{S(15, 4)}{L('M4 18L13 9', '#374f8a', 2.4)}{N(15, 8, 3)}</>,
  flag: <>{F('M2 2l8 17H2z', '#20ad3c', '#15752a')}{F('M2 6l6 13H2z', '#f3d02c', '#a68c14')}{F('M2 12l3 7H2z', '#df1f26', '#9b1418')}{L('M10 19L18 2', '#111', 2.2)}</>,
};
const Ico = ({ n, s = 20 }: { n: string; s?: number }) => <svg width={s} height={s} viewBox="0 0 20 20">{icons[n]}</svg>;

const Tools = ({ list }: { list: string[] }) => (
  <>
    {list.map((t, i) => {
      if (t === '|') return <TSep key={i} />;
      if (t === ',') return <TSep key={i} $short />;
      if (t === 'v') return <Drop key={i} />;
      if (t.startsWith('grip')) return <Grip key={i} $l={t === 'gripM' ? 3 : 0} $m={t === 'gripM' ? 3 : Number(t.slice(4))} />;
      if (t === 'combo') return <CaseCombo key={i}>CC1<ComboArrow /></CaseCombo>;
      if (t === '<' || t === '>') return <Slot key={i}><svg width="12" height="14" viewBox="0 0 12 14"><path d={t === '<' ? 'M10 1L2 7l8 6z' : 'M2 1l8 6-8 6z'} fill="#bac7de" stroke="#9badc8" /></svg></Slot>;
      const on = t.startsWith('*');
      return <Slot key={i} $on={on}><Ico n={on ? t.slice(1) : t} /></Slot>;
    })}
  </>
);

const row1a = ['grip2', 'new', 'open', 'cabB', 'cabU', 'save', 'notes', 'print', 'preview', '|', 'undo', 'redo', '|', 'para', 'zoomT', 'targetY', 'cursorNote', 'winY', '|', 'list', 'table', '|', 'lc', 'combo', '<', '>', '*pL', '*xx', '*eyeR', '*xxR', '|', 'hinge', 'frame', 'frameB'];
const row1b = ['grip4', 'hand', 'gridT', '*planes', 'planesR', 'planesK', 'bld', 'member', '|', 'chain', 'rotate', 'mirror', 'cross', 'info', 'gear', 'cogs'];
const row1c = ['grip6', 'expD', 'expU', 'pdfD', 'pdfU'];
const row2a = ['grip0', 'node', 'v', 'line', 'lineT', 'v', 'poly', 'v', ',', 'sup', 'sup2', 'plate', '|', 'dim', 'v', 'xxA', 'dash', '|', 'surf', 'v', 'sq', 'v', 'wings', 'v', 'solid', 'boxes', 'v', ',', 'ports', 'v', 'nodeL', 'fr1', 'fr2', 'fr3', 'bottle', 'v', 'gripM', 'cat', 'zoomR', 'zoomX', 'cube', 'cubes', '|', 'vX', 'vY', 'vZ', 'vmX', 'v', 'micro', 'v', ',', 'shape', 'v'];
const row2b = ['grip2', 'pi', 'chip', '|', 'beam', 'rainbow', 'heat', 'tree', '*blade', 'tiles', 'v', 'sine', 'abacus', ',', '*listBox', 'wand', 'v', 'flag', 'v'];

const menu: [React.ReactNode, number][] = [
  [<><u>F</u>icheiro</>, 55], [<>E<u>d</u>itar</>, 45], [<><u>V</u>er</>, 32], [<><u>I</u>nserir</>, 48], [<><u>C</u>álculo</>, 52], [<><u>R</u>esultados</>, 72],
  [<>Ferrame<u>n</u>tas</>, 78], [<><u>T</u>abela</>, 49], [<>O<u>p</u>ções</>, 54], [<><u>M</u>ódulos adicionais</>, 114], [<><u>J</u>anela</>, 49], [<>A<u>j</u>uda</>, 50],
];

/* ---------- 3D model ---------- */
const range = (n: number) => Array.from({ length: n }, (_, i) => i);
const CX = 395, RX = 174, RY = 60, TOP = 247, BOT = 795;
const front = (cy: number) => `M${CX - RX} ${cy}A${RX} ${RY} 0 0 0 ${CX + RX} ${cy}`;
const back = (cy: number) => `M${CX - RX} ${cy}A${RX} ${RY} 0 0 1 ${CX + RX} ${cy}`;

const redLn = '#ff1414';
const A = [547, 166], B = [685, 151], C = [655, 279], D = [793, 263];
const A2 = [547, 703], B2 = [685, 688], C2 = [655, 815], D2 = [793, 800];
const mix = (p: number[], q: number[], t: number) => [p[0] + (q[0] - p[0]) * t, p[1] + (q[1] - p[1]) * t];
const Arrow = ({ p, q }: { p: number[]; q: number[] }) => <line x1={p[0]} y1={p[1]} x2={q[0]} y2={q[1]} stroke={redLn} strokeWidth="1" markerEnd="url(#ra)" />;

const Model = () => {
  const ringPt = (deg: number, f: number) => {
    const r = deg * Math.PI / 180;
    return [CX + RX * f * Math.cos(r), 384 + RY * f * Math.sin(r)];
  };
  const degs = range(19).map(i => 252 - i * 10);
  const verticalX = range(25).map(i => CX + RX * Math.cos(i * 7.5 * Math.PI / 180));
  return (
    <Scene viewBox="0 101 1920 847">
      <defs>
        <marker id="ra" markerUnits="userSpaceOnUse" markerWidth="9" markerHeight="7" refX="8.5" refY="3.5" orient="auto"><path d="M0 .5L9 3.5 0 6.5z" fill="#ff1414" /></marker>
        <linearGradient id="inner" x1="0" x2="1" y1="0" y2="0">
          <stop offset="0" stopColor="#7c7cff" /><stop offset=".35" stopColor="#7070fb" /><stop offset=".62" stopColor="#5c5cf2" /><stop offset="1" stopColor="#6a6aff" />
        </linearGradient>
        <clipPath id="opening"><ellipse cx={CX} cy={TOP} rx={RX} ry={RY} /></clipPath>
        <clipPath id="shell"><path d={`${back(TOP)}V${BOT}A${RX} ${RY} 0 0 1 ${CX - RX} ${BOT}z`} /></clipPath>
      </defs>

      <polygon points={[A, C, C2, A2].join(' ')} fill="rgba(205,226,205,.26)" />
      <polygon points={[B, D, D2, B2].join(' ')} fill="rgba(205,226,205,.26)" />

      <g clipPath="url(#shell)">
        <rect x={CX - RX} y={TOP} width={448 - CX + RX} height={BOT + RY - TOP} fill="#000099" />
        <rect x="448" y={TOP} width={CX + RX - 448} height={BOT + RY - TOP} fill="#8080ff" />
      </g>
      <g clipPath="url(#opening)">
        <rect x="341" y={TOP - RY} width={CX + RX - 341} height={RY * 2} fill="url(#inner)" />
        <rect x={CX - RX} y={TOP - RY} width={341 - CX + RX} height={RY * 2} fill="#000099" />
        {[0, 1, 2, 3].map(i => <path key={i} d={back(TOP + 27.7 * (i + 1))} fill="none" stroke="#c6c6a0" strokeDasharray="1 2" opacity=".7" />)}
        {verticalX.map(x => <line key={x} x1={x} y1={TOP - RY} x2={x} y2={TOP + RY} stroke="#c6c6b0" strokeDasharray="1 2" opacity=".45" />)}
      </g>
      <g clipPath="url(#shell)">
        {range(20).map(i => <path key={i} d={front(TOP + 27.7 * (i + 1))} fill="none" stroke="#c8c8b0" strokeDasharray="1 2" opacity=".75" />)}
        {verticalX.map((x, i) => <line key={i} x1={x} y1={TOP + RY * Math.sin(i * 7.5 * Math.PI / 180)} x2={x} y2={BOT + RY * Math.sin(i * 7.5 * Math.PI / 180)} stroke="#c8c8b0" strokeDasharray="1 2" opacity=".65" />)}
      </g>
      <line x1="448" y1="305" x2="448" y2="852" stroke="#14144a" strokeWidth="1" />
      <ellipse cx={CX} cy={TOP} rx={RX} ry={RY} fill="none" stroke="#1a1a2a" strokeWidth="1.3" />
      <path d={front(BOT)} fill="none" stroke="#33e040" strokeWidth="1.2" />
      {[[341, 190], [229, 266], [448, 305]].map(p => <circle key={p[0]} cx={p[0]} cy={p[1]} r="1.8" fill="#7a7a10" />)}

      {/* load ring */}
      <ellipse cx={CX} cy="384" rx={RX} ry={RY} fill="none" stroke={redLn} strokeWidth="1.1" />
      <path d={degs.map((d, i) => { const p = ringPt(d, .6); return `${i ? 'L' : 'M'}${p[0]} ${p[1]}`; }).join('')} fill="none" stroke={redLn} strokeWidth="1.1" />
      {degs.map(d => { const p = ringPt(d, 1), q = ringPt(d, .6); return <line key={d} x1={p[0]} y1={p[1]} x2={q[0]} y2={q[1]} stroke={redLn} strokeWidth="1.1" />; })}
      <rect x="300" y="378" width="30" height="13" fill="#b8b8e6" opacity=".75" />
      <text x="315" y="388" textAnchor="middle" fontFamily={CL} fontWeight="700" fontSize="10" fill="#e0405e">-5.00</text>
      <rect x="339" y="462" width="13" height="15" fill="#fff" />
      <text x="345.5" y="473" textAnchor="middle" fontFamily={CL} fontSize="10" fill="#8a8a8a">S1</text>

      {/* top axes */}
      <line x1="395" y1="248" x2="362" y2="251" stroke="#22e022" strokeWidth="2" />
      <path d="M356 251l10-4v7z" fill="#22b022" />
      <line x1="395" y1="248" x2="404" y2="257" stroke="#d01010" strokeWidth="1.5" />
      <path d="M408 260l-7-2 3-3z" fill="#b01010" stroke="#900" />
      <line x1="395" y1="248" x2="395" y2="280" stroke="#1818e8" strokeWidth="1.6" />
      <path d="M395 286l-3-10h6z" fill="#1818c0" />
      <text x="347" y="258" fontFamily={CL} fontSize="10" fill="#28c028" textAnchor="middle">Y</text>
      <text x="410" y="269" fontFamily={CL} fontSize="10" fill="#e01010" textAnchor="middle">X</text>
      <text x="395" y="300" fontFamily={CL} fontSize="10" fill="#2020e0" textAnchor="middle">Z</text>

      {/* leader */}
      <text x="173" y="341" fontFamily={CL} fontSize="9" fill="#000">1</text>
      <path d="M178 345L220 340M178 345L208 380" fill="none" stroke="#222" strokeWidth="1" strokeDasharray="7 3 1 3" />
      <path d="M211 384l-9-4 4-4z" fill="#111" />

      {/* free load block */}
      {range(21).map(i => <Arrow key={'t' + i} p={mix(A, C, i / 20)} q={mix(B, D, i / 20)} />)}
      {range(21).map(i => <Arrow key={'b' + i} p={mix(A2, C2, i / 20)} q={mix(B2, D2, i / 20)} />)}
      {range(9).map(i => <Arrow key={'l' + i} p={mix(A, A2, (i + 1) / 10)} q={mix(B, B2, (i + 1) / 10)} />)}
      {range(9).map(i => <Arrow key={'r' + i} p={mix(C, C2, (i + 1) / 10)} q={mix(D, D2, (i + 1) / 10)} />)}
      <path d={`M${A}L${A2}M${B}L${B2}M${C}L${C2}M${D}L${D2}M${A}L${C}M${B}L${D}M${A2}L${C2}M${B2}L${D2}`} fill="none" stroke={redLn} strokeWidth="1.1" />
      {[A, C, A2, C2].map(p => <circle key={p.join()} cx={p[0]} cy={p[1]} r="1.8" fill={redLn} />)}
      {[A, C, A2, C2].map(p => (
        <text key={p.join()} x={p[0] - 4} y={p[1] + 4} textAnchor="end" fontFamily={CL} fontSize="9" fill={redLn}>p-z 5.00</text>
      ))}

      {/* corner axes */}
      <line x1="56" y1="885" x2="30" y2="885" stroke="#22d022" strokeWidth="2" />
      <path d="M21 885l12-4v8z" fill="#22b022" />
      <line x1="56" y1="885" x2="68" y2="891" stroke="#e01010" strokeWidth="1.5" />
      <path d="M72 893l-8-1 2-4z" fill="#b01010" />
      <line x1="56" y1="885" x2="56" y2="915" stroke="#1818e0" strokeWidth="2" />
      <path d="M56 925l-4-12h8z" fill="#1818c0" />
      <text x="10" y="892" fontFamily={CL} fontSize="10" fill="#28c028" textAnchor="middle">Y</text>
      <text x="73" y="905" fontFamily={CL} fontSize="10" fill="#e01010" textAnchor="middle">X</text>
      <text x="56" y="937" fontFamily={CL} fontSize="10" fill="#2020e0" textAnchor="middle">Z</text>
    </Scene>
  );
};

/* ---------- dialog drawings ---------- */
const PickIco = () => (
  <svg width="19" height="17" viewBox="0 0 19 17">
    <path d="M2 1l3 2 3-1-1 2.5 2 1.500-3-.2-2 2-.5-2.500-2.500-1.500z" fill="#c8505c" stroke="#8f2a36" strokeWidth=".4" />
    <path d="M7 4l8 7-3.5.5 2.2 4-1.8.8-2-4-2.900 2z" fill="#fff" stroke="#222" strokeWidth=".8" />
  </svg>
);
const HandIco = () => (
  <svg width="19" height="15" viewBox="0 0 19 15">
    <rect x=".5" y=".5" width="18" height="14" fill="#ddd" stroke="#555" />
    <rect x=".5" y=".5" width="18" height="3" fill="#2d5ea8" />
    <path d="M2 7l5-2 4 1 5 1 1 2-4 2-5 0-5-2z" fill="#b8875a" stroke="#5b3f25" strokeWidth=".6" />
  </svg>
);
const HelpIco = () => (
  <svg width="18" height="18" viewBox="0 0 18 18">
    <circle cx="9" cy="8" r="7" fill="#cfdcf2" stroke="#5f6f92" />
    <path d="M4 14l-1 3 4-2z" fill="#cfdcf2" stroke="#5f6f92" strokeWidth=".6" />
    <text x="9" y="12" textAnchor="middle" fontFamily='"Liberation Serif"' fontStyle="italic" fontWeight="700" fontSize="11" fill="#1e2e60">?</text>
  </svg>
);
const DecimalIco = () => (
  <svg width="19" height="17" viewBox="0 0 19 17">
    <rect x="1" y="1" width="17" height="4" fill="#79a85a" stroke="#4f7a3a" strokeWidth=".5" />
    <text x="9.5" y="14" textAnchor="middle" fontFamily='"Liberation Serif"' fontStyle="italic" fontWeight="700" fontSize="9.5" fill="#1e2e60" textDecoration="underline">0.00</text>
  </svg>
);
const FolderIco = () => <svg width="18" height="16" viewBox="0 0 20 18">{F('M2 4h6l2 2h7v10H2z', '#e3d47e', '#8a7d2e')}{L('M11 3a5 5 0 0 1 6 4', '#4f78b8', 1.6)}</svg>;
const DiskIco = () => <svg width="18" height="17" viewBox="0 0 20 20">{F('M2 5h13v13H2z', '#7078c8', '#3d4684')}{F('M8 2h10v8H8z', '#fff', '#555')}{F('M5 12h7v6H5z', '#333', '#333')}</svg>;
const CalcIco = () => <svg width="18" height="16" viewBox="0 0 20 18">{F('M2 3h16v13H2z', '#555a62', '#333')}{F('M4 4h12v3H4z', '#cfd6dc', '#333')}{[5, 8, 11, 14].flatMap(x => [9, 12].map(y => <rect key={x + '-' + y} x={x} y={y} width="2" height="2" fill="#eee" />))}</svg>;
const PagesIco = () => <svg width="18" height="15" viewBox="0 0 20 16">{F('M1 1h13v9H1z', '#9a9a82', '#555')}{F('M3 3h13v9H3z', '#b6b69a', '#555')}{F('M5 5h13v9H5z', '#d6d6b8', '#555')}</svg>;
const MagIco = () => <svg width="19" height="15" viewBox="0 0 19 15"><path d="M2 2h12M2 5h8M2 8h6M2 11h5" stroke="#5a6068" fill="none" /><circle cx="12" cy="9" r="3.4" fill="#bcd9f2" stroke="#33699f" /><path d="M14.5 11l3 3" stroke="#33699f" strokeWidth="2" /></svg>;
const XlIco = ({ up }: { up: boolean }) => <svg width="19" height="17" viewBox="0 0 19 17">{F('M1 1h13v12H1z', '#cfe6cf', '#2f7a3a')}{L('M1 5h13M1 9h13M6 1v12', '#2f7a3a', .6)}{F('M5 4l5 6M10 4l-5 6', '#1c6f2c', '#1c6f2c')}<path d={up ? 'M13 9l5 7H8z' : 'M8 10h10l-5 6z'} fill="#d31620" stroke="#8f1418" strokeWidth=".5" /></svg>;
const ColIco = ({ dir }: { dir: 'in' | 'out' }) => (
  <svg width="19" height="15" viewBox="0 0 19 15">
    {dir === 'in' ? <>{F('M2 1h4v13H2z', '#d8d8d8', '#999')}{L('M7 7h9', '#d63a3a', 1.8)}{F('M13 4l4 3.5-4 3.5z', '#d63a3a', '#d63a3a')}</> : <>{F('M13 1h4v13h-4z', '#d8d8d8', '#999')}{F('M2 1h4v13H2z', '#d8d8d8', '#999')}{L('M4 7h8', '#d63a3a', 1.8)}{F('M7 4l-4 3.5 4 3.5z', '#d63a3a', '#d63a3a')}</>}
  </svg>
);
const DelIco = () => <svg width="17" height="17" viewBox="0 0 17 17"><path d="M2 2l4 0 3 4 3-4 4 0-5 6 5 7-4 0-3-5-3 5-4 0 5-7z" fill="#e0303a" stroke="#8f1418" strokeWidth=".6" /></svg>;

const Radio = ({ on, label, h, t, l }: { on?: boolean; label: string; h?: number; t?: number; l?: number }) => (
  <RadioWrap $h={h} $t={t} $l={l}><Dot $on={on} />{label}</RadioWrap>
);
const SpinField = ({ v, sel }: { v: string; sel?: boolean }) => (
  <Spin><SpinVal>{sel ? <mark>{v}</mark> : v}</SpinVal><SpinBtn /><SpinNext /></Spin>
);

const Illustration = () => {
  const arc = (cy: number) => `M705 ${cy - 92}A428 92 0 0 0 705 ${cy + 92}`;
  const inArc = (cy: number) => `M743 ${cy - 92}A358 92 0 0 0 743 ${cy + 92}`;
  const hatch: number[][] = [[357, -53, 430, -46], [450, -78, 520, -80], [555, -88, 600, -86], [360, 62, 440, 47], [475, 79, 530, 75], [555, 88, 610, 86]];
  const blue = '#39aee6';
  return (
    <DrawSvg viewBox="6 3 1440 852" preserveAspectRatio="none">
      <defs>
        <linearGradient id="cream" x1="0" y1="1" x2="1" y2="0"><stop offset=".35" stopColor="#fff" /><stop offset="1" stopColor="#fdf4d9" /></linearGradient>
        <linearGradient id="wall" x1="0" x2="1" y1="0" y2="0"><stop offset="0" stopColor="#eceeee" /><stop offset=".42" stopColor="#c8caca" /><stop offset="1" stopColor="#e8eaea" /></linearGradient>
        <linearGradient id="disc" x1="0" x2="1" y1="0" y2="0"><stop offset="0" stopColor="#e0e2e2" /><stop offset="1" stopColor="#c2c4c4" /></linearGradient>
      </defs>
      <rect x="6" y="3" width="1440" height="852" fill="url(#cream)" />
      <path d="M385 318H1101V607A358 92 0 0 1 385 607z" fill="url(#wall)" />
      <ellipse cx="743" cy="318" rx="358" ry="92" fill="url(#disc)" />
      <ellipse cx="743" cy="607" rx="358" ry="92" fill="url(#disc)" />
      {[318, 607].map(cy => (
        <g key={cy} fill="none" stroke={blue} strokeWidth="2">
          <path d={arc(cy)} />
          <path d={inArc(cy)} />
          <path d={`M277 ${cy + 4}H385`} />
          {hatch.map(h => <line key={h[0]} x1={h[0]} y1={cy + h[1]} x2={h[2]} y2={cy + h[3]} strokeWidth="1.5" />)}
        </g>
      ))}
      <path d="M277 318V607M705 410V700" fill="none" stroke={blue} strokeWidth="2.5" />
      <line x1="743" y1="455" x2="743" y2="590" stroke="#a8a8a8" strokeWidth="3" strokeDasharray="14 8 3 8" />
      {/* axes */}
      <path d="M167 82L100 121" stroke="#1aa04a" strokeWidth="2.5" fill="none" /><path d="M84 131l13-19 8 14z" fill="#1aa04a" />
      <path d="M167 82L245 103" stroke="#e02a2a" strokeWidth="2.5" fill="none" /><path d="M264 108l-23-11-3 15z" fill="#e02a2a" />
      <path d="M167 82V160" stroke="#a9a2cc" strokeWidth="4" fill="none" /><path d="M167 180l-9-22h18z" fill="#3d2f91" />
      <circle cx="167" cy="82" r="5" fill="#8c3a7e" />
      <path d="M743 318L648 374" stroke="#0f9a43" strokeWidth="4" fill="none" /><path d="M630 384l18-22 8 14z" fill="#0f9a43" />
      <path d="M743 318L855 348" stroke="#e21c2c" strokeWidth="4" fill="none" /><path d="M874 352l-24-11-3 14z" fill="#e21c2c" />
      <path d="M743 318L785 405" stroke="#e21c2c" strokeWidth="4" fill="none" /><path d="M792 420l-15-20 13-5z" fill="#e21c2c" />
      <path d="M743 318V435" stroke="#3d2f91" strokeWidth="4" fill="none" /><path d="M743 455l-8-22h16z" fill="#3d2f91" />
      <path d="M706 342A52 26 0 0 0 762 352" stroke={blue} strokeWidth="2.5" fill="none" /><path d="M704 341l14 2-6 8z" fill={blue} />
      <circle cx="760" cy="352" r="5" fill={blue} />
      <path d="M770 350c12-4 20-10 22-20" stroke="#5c5c5c" strokeWidth="2" fill="none" />
      <circle cx="791" cy="330" r="4" fill="#5c5c5c" />
      {[[743, 224], [386, 318], [1101, 318], [745, 606]].map(p => <rect key={p[0]} x={p[0] - 6} y={p[1] - 6} width="12" height="12" fill="#e21c2c" />)}
      <circle cx="743" cy="318" r="8" fill="#e21c2c" />
      <g fontFamily={CL} fontSize="34">
        <text x="62" y="158" fill="#1aa04a" textAnchor="middle">Y</text>
        <text x="285" y="128" fill="#e02a2a" textAnchor="middle">X</text>
        <text x="169" y="218" fill="#3d2f91" textAnchor="middle">Z</text>
        <text x="265" y="232" fill="#3aa6e0">p·k<tspan fontSize="22" dy="4">α</tspan></text>
        <text x="765" y="297" fill="#555">s<tspan fontSize="26" dy="8">1</tspan></text>
        <text x="617" y="368" fill="#0f9a43" textAnchor="middle">Y</text>
        <text x="896" y="372" fill="#e21c2c" textAnchor="middle">X</text>
        <text x="805" y="455" fill="#e21c2c" textAnchor="middle">X′</text>
        <text x="765" y="490" fill="#3d2f91" textAnchor="middle">Z</text>
        <text x="808" y="385" fill="#666" textAnchor="middle" fontFamily='"DejaVu Sans"'>β</text>
        <text x="713" y="390" fill="#3aa6e0" textAnchor="middle" fontFamily='"DejaVu Sans"'>α</text>
        <text x="765" y="622" fill="#555">s<tspan fontSize="26" dy="6">2</tspan></text>
      </g>
    </DrawSvg>
  );
};

const Chart = () => {
  const gridX = [337, 409, 481, 553, 622, 694, 766, 838, 910, 982, 1054, 1126, 1198, 1267];
  const gridY = [303, 391, 478, 565];
  const arrows = [265, 322, 380, 437, 494, 552, 610, 667, 724, 781];
  const xLab: [number, string][] = [[264, '0.00'], [406, '50.00'], [548, '100.00'], [691, '150.00'], [835, '200.00'], [977, '250.00'], [1121, '300.00'], [1293, '360.00']];
  const yLab: [number, string][] = [[300, '1.00'], [387, '0.75'], [474, '0.50'], [561, '0.25'], [648, '0.00']];
  return (
    <DrawSvg viewBox="6 15 1440 969" preserveAspectRatio="none">
      <defs>
        <linearGradient id="pale" x1="0" y1="1" x2="1" y2="0"><stop offset=".25" stopColor="#fff" /><stop offset=".85" stopColor="#feffe0" /></linearGradient>
      </defs>
      <rect x="6" y="15" width="1440" height="969" fill="url(#pale)" />
      {gridY.map(y => <line key={y} x1="781" y1={y} x2="1298" y2={y} stroke="#b4b4a0" strokeWidth="2" />)}
      {gridX.filter(x => x > 781).map(x => <line key={x} x1={x} y1="303" x2={x} y2="651" stroke="#b4b4a0" strokeWidth="2" />)}
      {[265, ...gridX].map(x => <line key={x} x1={x} y1="655" x2={x} y2="787" stroke="#c0c0b4" strokeWidth="2" />)}
      <rect x="265" y="304" width="516" height="347" fill="#d6d6fb" stroke="#0b0b8a" strokeWidth="2.5" />
      {arrows.map(x => <g key={x}><line x1={x} y1="304" x2={x} y2="640" stroke={x > 430 && x < 560 ? '#5c60bb' : '#0b0b8a'} strokeWidth={x > 430 && x < 560 ? 4 : 2.5} /><path d={`M${x - 8} 635h16l-8 14z`} fill="#0b0b8a" /></g>)}
      {[265, 781].map(x => <rect key={x} x={x - 4} y="300" width="8" height="8" fill="#0b0b8a" />)}
      <line x1="224" y1="303" x2="224" y2="652" stroke="#000" strokeWidth="3" />
      {range(21).map(i => <line key={i} x1={i % 5 === 0 ? 198 : 212} y1={303 + i * 17.4} x2="224" y2={303 + i * 17.4} stroke="#000" strokeWidth="2.5" />)}
      <line x1="265" y1="652" x2="1297" y2="652" stroke="#000" strokeWidth="8" />
      <rect x="255" y="642" width="18" height="18" fill="#ff0000" />
      <rect x="1287" y="642" width="18" height="18" fill="#ff0000" />
      {[265, 781, 1297].map(x => <rect key={x} x={x - 4} y="778" width="8" height="9" fill="#ff0000" />)}
      <line x1="265" y1="787" x2="1297" y2="787" stroke="#000" strokeWidth="3" />
      {range(73).map(i => <line key={i} x1={265 + i * 14.33} y1="787" x2={265 + i * 14.33} y2={i % 5 === 0 ? 812 : 798} stroke="#000" strokeWidth="2.5" />)}
      <g fontFamily={CL} fontSize="27" fill="#2c2c2c">
        {xLab.map(([x, t]) => <text key={t} x={x} y="833" textAnchor="middle">{t}</text>)}
        {yLab.map(([y, t]) => <text key={t} x="192" y={y + 10} textAnchor="end">{t}</text>)}
        <text x="1373" y="838" textAnchor="middle" fontSize="32">[°]</text>
        <text x="171" y="266" textAnchor="middle" fontSize="32">[-]</text>
      </g>
    </DrawSvg>
  );
};

export default function App() {
  return (
    <>
      <Global />
      <Win>
        <TitleBar>
          <svg width="18" height="19" viewBox="0 0 18 19">
            <path d="M5 3l8-2 4 3-2 10-8 2z" fill="#5577a3" stroke="#2f4a70" strokeWidth=".6" />
            <path d="M8 3l6 1-2 9" fill="none" stroke="#9bb7d8" />
            <text x="4" y="17" fontFamily={CL} fontWeight="700" fontSize="13" fill="#e8b510" stroke="#5a4300" strokeWidth=".4">5</text>
          </svg>
          <TitleText>RFEM 5.24.01 x64 - [3508-model-file, CC1*]</TitleText>
          <Caption><svg width="12" height="12" viewBox="0 0 12 12"><path d="M1 6h10" stroke="#999" /></svg></Caption>
          <Caption><svg width="12" height="12" viewBox="0 0 12 12"><path d="M1 3.5h7.5V11H1zM3.5 3.5V1H11v7.5H8.5" fill="none" stroke="#999" /></svg></Caption>
          <Caption><svg width="12" height="12" viewBox="0 0 12 12"><path d="M1 1l10 10M11 1L1 11" stroke="#999" /></svg></Caption>
        </TitleBar>
        <Chrome>
          <MenuBar>
            <Grip $h={15} $m={0} />
            <MenuLogo>
              <svg width="18" height="14" viewBox="0 0 18 14"><path d="M1 9h16M5 9l4-6 4 6M9 3v6" stroke="#fff" fill="none" strokeWidth="1.3" /><rect y="11" width="18" height="3" fill="#e8eef8" /></svg>
            </MenuLogo>
            {menu.map(([m, w], i) => <MenuItem key={i} $w={w}>{m}</MenuItem>)}
            <MdiBox>
              <svg width="10" height="12" viewBox="0 0 10 12"><rect x="1" y="8" width="8" height="2" fill="#555" /></svg>
              <svg width="12" height="12" viewBox="0 0 12 12"><rect x="1" y="2" width="9" height="8" fill="#ddd" stroke="#777" /><rect x="1" y="1" width="9" height="3" fill="#666" /></svg>
              <svg width="12" height="12" viewBox="0 0 12 12"><path d="M1 1l10 10M11 1L1 11" stroke="#777" strokeWidth="2.4" /></svg>
            </MdiBox>
          </MenuBar>
          <ToolRow $h={24}>
            <ToolGroup $w={860}><Tools list={row1a} /></ToolGroup>
            <ToolGroup $w={324}><Tools list={row1b} /></ToolGroup>
            <ToolGroup $w={100}><Tools list={row1c} /></ToolGroup>
          </ToolRow>
          <ToolRow $h={26}>
            <ToolGroup $w={941}><Tools list={row2a} /></ToolGroup>
            <ToolGroup $w={350}><Tools list={row2b} /></ToolGroup>
          </ToolRow>
        </Chrome>

        <Workspace>
          <Model />
          <Info>
            Modo de visibilid.<br />
            Distribuição da carga [kN],[kN/m^2]<br />
            Cortes<br />
            CC1<br />
            Cargas [kN/m^2]
          </Info>

          <Panel>
            <PanelHead>
              Painel
              <svg width="10" height="10" viewBox="0 0 10 10"><path d="M1 1l8 8M9 1L1 9" stroke="#8a9098" strokeWidth="1.5" /></svg>
            </PanelHead>
            <PanelBody>
              <PanelLine $h={16}>Distribuição da carga</PanelLine>
              <PanelLine $h={17} $l={4}>[kN/m<sup>2</sup> ]</PanelLine>
              <Legend>
                <LegendBar />
                <LegendTicks><Tick>-5.00</Tick><Tick>-5.00</Tick></LegendTicks>
              </Legend>
              <Stats>
                <span>Máx</span><span>:</span><span>-5.00</span>
                <span>Mín</span><span>:</span><span>-5.00</span>
              </Stats>
              <PanelFoot><IconBtn><MagIco /></IconBtn></PanelFoot>
            </PanelBody>
            <PanelTabs>
              <PanelTab $on>
                <svg width="18" height="16" viewBox="0 0 18 16">
                  {['#e02020', '#f09020', '#e8d820', '#30c040', '#20b0e0', '#2030d0'].map((c, i) => <rect key={c} x="1" y={1 + i * 2.3} width="8" height="2" fill={c} />)}
                  {[0, 1, 2, 3].map(i => <rect key={i} x="11" y={1 + i * 3.5} width="4" height="2.5" fill="#fff" stroke="#888" strokeWidth=".5" />)}
                </svg>
              </PanelTab>
              <PanelTab>
                <svg width="20" height="15" viewBox="0 0 20 15"><path d="M10 2v11M3 3h14M5 13h10" stroke="#5c4a20" fill="none" /><path d="M1 8l3-5 3 5zM13 8l3-5 3 5z" fill="#e3cf80" stroke="#5c4a20" strokeWidth=".6" /></svg>
              </PanelTab>
              <PanelTab>
                <Ico n="scope" s={18} />
              </PanelTab>
            </PanelTabs>
          </Panel>

          <Dialog $x={804} $y={129} $w={400} $h={569}>
            <DialogTitle>Editar carga variável livre</DialogTitle>
            <DialogBody $pad="8px 16px 0 9px" $gap={10}>
              <Row $gap={9} $h={45}>
                <Section $w={96}>
                  <SectionHead>Nº</SectionHead>
                  <SectionBody $pad="4px 3px 0 2px"><FieldBox $ro>1</FieldBox></SectionBody>
                </Section>
                <Section>
                  <SectionHead>Nas superfícies nº</SectionHead>
                  <SectionBody $pad="4px 3px 0 2px"><Row $gap={4}><FieldBox>1</FieldBox><IconBtn><PickIco /></IconBtn></Row></SectionBody>
                </Section>
              </Row>
              <Row $gap={8} $h={247}>
                <Section $w={194}>
                  <SectionHead>Distribuiçao de carga</SectionHead>
                  <SectionBody $pad="6px 0 0 2px">
                    <Text>Na direção Z:</Text>
                    <Radio on label="Uniforme" t={5} l={1} />
                    <Row $gap={0}><Radio label="Variável..." l={1} /><Push $w={46} /><IconBtn><HandIco /></IconBtn></Row>
                    <Text $t={34}>Ao longo de perímetro:</Text>
                    <Radio label="Uniforme" t={3} l={1} />
                    <Row $gap={0}><Radio on label="Variável..." l={1} /><Push $w={46} /><IconBtn><HandIco /></IconBtn></Row>
                  </SectionBody>
                </Section>
                <Col $gap={10}>
                  <Section $h={85}>
                    <SectionHead>Plano de projeção da carga</SectionHead>
                    <SectionBody $pad="5px 0 0 2px">
                      <Radio label="Plano XY" h={20} />
                      <Radio label="Plano YZ" h={20} />
                      <Radio on label="Plano XZ" h={19} />
                    </SectionBody>
                  </Section>
                  <Section $h={152}>
                    <SectionHead>Direção da carga</SectionHead>
                    <SectionBody $pad="3px 0 0 1px">
                      <Row $gap={0} $h={58}>
                        <Col><Text $t={2} $h={13}>Local</Text><Text $h={13}>em relação à área real:</Text></Col>
                        <Col $w={46}><Radio label="x" h={20} /><Radio label="y" h={20} /><Radio on label="z" h={18} /></Col>
                      </Row>
                      <Rule $m="6px 5px 4px 1px" />
                      <Row $gap={0} $h={58}>
                        <Col><Text $t={3} $h={13}>Global</Text><Text $h={13}>em relação à área real:</Text></Col>
                        <Col $w={46}><Radio label="XL" h={20} /><Radio label="YL" h={20} /><Radio label="ZL" h={19} /></Col>
                      </Row>
                    </SectionBody>
                  </Section>
                </Col>
              </Row>
              <Section $h={115}>
                <SectionHead>Posição da carga e magnitude</SectionHead>
                <SectionBody>
                  <PosGrid>
                    <ColHead $c={2}>X&nbsp; [m]</ColHead>
                    <ColHead $c={4}>Z&nbsp; [m]</ColHead>
                    <ColHead $c={8}>p&nbsp; [kN/m<sup>2</sup> ]</ColHead>
                    <Cell $c={1} $r={2}>1 :</Cell>
                    <Cell $c={2} $r={2}><SpinField v="-3.000" /></Cell>
                    <Cell $c={4} $r={2}><SpinField v="0.000" /></Cell>
                    <Cell $c={6} $r={2}><IconBtn><PickIco /></IconBtn></Cell>
                    <Cell $c={8} $r={2}><SpinField v="-5.00" /></Cell>
                    <Cell $c={1} $r={4}>2 :</Cell>
                    <Cell $c={2} $r={4}><SpinField v="3.000" /></Cell>
                    <Cell $c={4} $r={4}><SpinField v="10.000" /></Cell>
                    <Cell $c={6} $r={4}><IconBtn><PickIco /></IconBtn></Cell>
                    <Cell $c={6} $r={6}>
                      <IconBtn>
                        <svg width="19" height="17" viewBox="0 0 19 17">
                          <text x="0" y="16" fontFamily={CL} fontWeight="700" fontSize="10" fill="#222">2</text>
                          <path d="M8 3l7 6-3 .5 2 4-1.8.8-2-4-2.5 2z" fill="#fff" stroke="#222" strokeWidth=".8" />
                          <path d="M5 0l3 1-1 3-2-1z" fill="#c8505c" />
                        </svg>
                      </IconBtn>
                    </Cell>
                  </PosGrid>
                </SectionBody>
              </Section>
              <Section $h={46}>
                <SectionHead>Comentário</SectionHead>
                <SectionBody $pad="4px 3px 0 2px">
                  <Row $gap={4}>
                    <FieldBox>
                      <span />
                      <svg width="16" height="10" viewBox="0 0 16 10"><path d="M3 2l5 5 5-5" fill="none" stroke="#555" /></svg>
                    </FieldBox>
                    <IconBtn><PagesIco /></IconBtn>
                  </Row>
                </SectionBody>
              </Section>
            </DialogBody>
            <Rule $m="0 0 0 8px" />
            <Foot $pad="10px 0 9px 9px">
              <IconBtn><HelpIco /></IconBtn><Push $w={9} /><IconBtn><DecimalIco /></IconBtn>
            </Foot>
          </Dialog>

          <Dialog $x={1191} $y={36} $w={714} $h={733} $active>
            <DialogTitle $active>
              Editar carga variável ao longo do perímetro
              <svg width="12" height="12" viewBox="0 0 12 12"><path d="M1 1l10 10M11 1L1 11" stroke="#222" /></svg>
            </DialogTitle>
            <DialogBody $pad="8px 7px 0 8px" $gap={9}>
              <TwoPanes>
                <Section $w={210} $h={285}>
                  <SectionHead>Eixo de rotação</SectionHead>
                  <SectionBody $pad="7px 3px 0 1px">
                    <Text $l={2}>Primeiro ponto do eixo S<sub>1</sub></Text>
                    <AxisGrid $t={2}>
                      <span>X :</span><SpinField v="0.000" sel /><Unit>[m]</Unit><PickCell><IconBtn><PickIco /></IconBtn></PickCell>
                      <span>Y :</span><SpinField v="0.000" /><Unit>[m]</Unit><span />
                      <span>Z:</span><SpinField v="0.000" /><Unit>[m]</Unit><span />
                    </AxisGrid>
                    <Text $l={2} $t={15}>Segundo ponto do eixo S<sub>2</sub></Text>
                    <AxisGrid $t={3}>
                      <span>X :</span><SpinField v="0.000" /><Unit $o={5}>[m]</Unit><PickCell><IconBtn><PickIco /></IconBtn></PickCell>
                      <span>Y :</span><SpinField v="0.000" /><Unit $o={5}>[m]</Unit><span />
                      <span>Z :</span><SpinField v="1.000" /><Unit $o={5}>[m]</Unit><span />
                    </AxisGrid>
                    <Text $t={15}>Ângulo inicial</Text>
                    <AxisGrid $t={3}>
                      <span>β :</span><SpinField v="0.00" /><Unit $o={5}>[°]</Unit><PickCell><IconBtn><PickIco /></IconBtn></PickCell>
                    </AxisGrid>
                  </SectionBody>
                </Section>
                <Drawing $h={285}><Illustration /></Drawing>
              </TwoPanes>
              <TwoPanes>
                <Section $w={210} $h={353}>
                  <SectionHead>Carga</SectionHead>
                  <SectionBody>
                    <TableHead>
                      <HeadCell>α [°]</HeadCell>
                      <HeadCell>k<sub>α</sub> [-]</HeadCell>
                    </TableHead>
                    {[['0.00', '1.00'], ['180.00', '1.00'], ['180.00', '0.00'], ['360.00', '0.00'], ['', '']].map((r, i) => (
                      <TableRow key={i}><ValCell $focus={i === 0}>{r[0]}</ValCell><ValCell>{r[1]}</ValCell></TableRow>
                    ))}
                    <TableFill><FillCell /><FillCell /></TableFill>
                    <BtnStrip>
                      <IconBtn><XlIco up /></IconBtn>
                      <IconBtn><XlIco up={false} /></IconBtn>
                      <Push $w={6} />
                      <IconBtn><ColIco dir="in" /></IconBtn>
                      <IconBtn><ColIco dir="out" /></IconBtn>
                      <Push $w={6} />
                      <IconBtn><DelIco /></IconBtn>
                    </BtnStrip>
                  </SectionBody>
                </Section>
                <Col $w={480}>
                  <Drawing $h={323}><Chart /></Drawing>
                  <ChartBar>
                    <IconBtn>
                      <svg width="18" height="12" viewBox="0 0 18 12"><rect x=".5" y=".5" width="17" height="11" fill="#fff" stroke="#222" /><text x="9" y="9.5" textAnchor="middle" fontFamily={CL} fontSize="8.5" fill="#555">123</text></svg>
                    </IconBtn>
                  </ChartBar>
                </Col>
              </TwoPanes>
            </DialogBody>
            <Rule $m="0 8px" />
            <Foot $pad="10px 8px 8px 9px">
              <IconBtn><HelpIco /></IconBtn><Push $w={9} />
              <IconBtn><FolderIco /></IconBtn><Push $w={5} />
              <IconBtn><DiskIco /></IconBtn><Push $w={10} />
              <IconBtn><CalcIco /></IconBtn><Push />
              <TextBtn $primary>OK</TextBtn><Push $w={9} />
              <TextBtn>Cancelar</TextBtn>
            </Foot>
          </Dialog>
        </Workspace>
      </Win>
    </>
  );
}
